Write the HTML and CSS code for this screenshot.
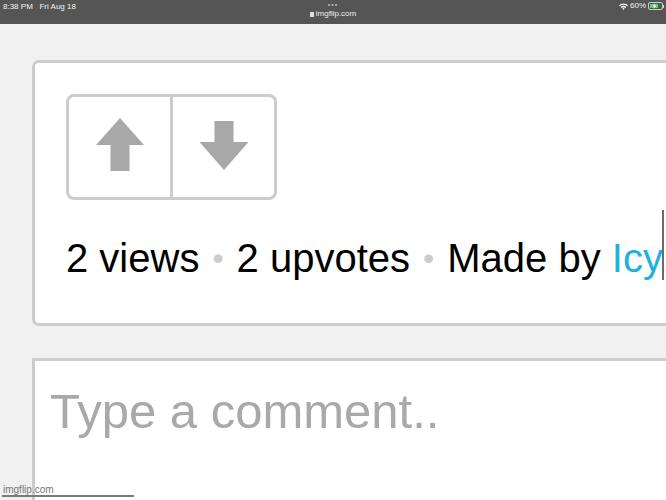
FILE: index.html
```html
<!DOCTYPE html>
<html>
<head>
<meta charset="utf-8">
<link rel="stylesheet" href="styles.css">
</head>
<body>
<div class="statusbar">
  <div class="sb-left">8:38 PM&nbsp;&nbsp;&nbsp;Fri Aug 18</div>
  <div class="sb-center">
    <div class="dots">•••</div>
    <div class="url"><span class="lock"></span>imgflip.com</div>
  </div>
  <div class="sb-right">
    <svg class="wifi" width="9" height="7" viewBox="0 0 9 7"><path d="M0 2.3A6.5 6.5 0 0 1 9 2.3L8 3.3A5 5 0 0 0 1 3.3Z M1.7 4A4 4 0 0 1 7.3 4L6.3 5A2.6 2.6 0 0 0 2.7 5Z M3.4 5.7A1.5 1.5 0 0 1 5.6 5.7L4.5 6.9Z" fill="#fff"/></svg>
    <span class="pct">60%</span>
    <span class="battery"><span class="bfill"><svg width="6" height="7" viewBox="0 0 6 7"><path d="M3.5 0L0.8 4H2.8L2.3 7L5.2 3H3.2Z" fill="#fff"/></svg></span></span><span class="bcap"></span>
  </div>
</div>
<div class="page">
  <div class="card info">
    <div class="votes">
      <div class="vote">
        <svg width="50" height="54" viewBox="0 0 50 54"><path d="M25 0L49 27H34.5V53H15.5V27H1Z" fill="#a8a8a8"/></svg>
      </div>
      <div class="vote down">
        <svg width="50" height="50" viewBox="0 0 50 50"><path d="M15.5 0H34.5V21H49.5L25 49L0.5 21H15.5Z" fill="#a8a8a8"/></svg>
      </div>
    </div>
    <div class="stats">2 views<span class="dot">•</span>2 upvotes<span class="dot">•</span>Made by <a class="author">Icy</a></div>
    <div class="caret"></div>
  </div>
  <div class="card comment">
    <div class="placeholder">Type a comment..</div>
  </div>
</div>
<div class="watermark">imgflip.com</div>
</body>
</html>
```

FILE: styles.css
```css
html, body {
  margin: 0;
  padding: 0;
}
body {
  width: 666px;
  height: 500px;
  overflow: hidden;
  background: #f0f0f0;
  font-family: "Liberation Sans", Arial, sans-serif;
  position: relative;
}
.statusbar {
  height: 24px;
  background: #555555;
  color: #f2f2f2;
  font-size: 8px;
  display: flex;
  justify-content: space-between;
  position: relative;
}
.sb-left {
  padding: 2px 0 0 3px;
  line-height: 10px;
}
.sb-center {
  position: absolute;
  left: 0;
  right: 0;
  top: 0;
  text-align: center;
}
.dots {
  font-size: 7px;
  line-height: 8px;
  letter-spacing: 1px;
  color: #bbb;
  margin-top: 1px;
}
.url {
  line-height: 10px;
  font-size: 8px;
  color: #eee;
}
.lock {
  display: inline-block;
  width: 4px;
  height: 5px;
  background: #ddd;
  margin-right: 2px;
  vertical-align: -1px;
}
.sb-right {
  display: flex;
  align-items: center;
  height: 12px;
  padding-right: 2px;
  gap: 2px;
}
.pct {
  font-size: 8px;
  line-height: 10px;
}
.battery {
  width: 15px;
  height: 8px;
  border: 1px solid #ccc;
  border-radius: 2px;
  box-sizing: border-box;
  padding: 1px;
  display: flex;
}
.bfill {
  width: 8px;
  background: #4cd964;
  display: flex;
  align-items: center;
  justify-content: center;
}
.bfill svg {
  width: 5px;
  height: 6px;
}
.bcap {
  width: 1px;
  height: 3px;
  background: #ccc;
  margin-left: -2px;
}
.page {
  padding-left: 32px;
}
.card {
  background: #fff;
  border: 3px solid #cccccc;
  width: 700px;
  box-sizing: border-box;
}
.info {
  margin-top: 36px;
  height: 266px;
  border-radius: 7px;
  padding: 31px 0 0 31px;
  position: relative;
}
.votes {
  display: flex;
  width: 211px;
  height: 106px;
  box-sizing: border-box;
  border: 3px solid #cccccc;
  border-radius: 8px;
}
.vote {
  flex: 1;
  display: flex;
  align-items: center;
  justify-content: center;
  padding-bottom: 4px;
}
.vote.down {
  border-left: 3px solid #cccccc;
  padding-bottom: 2px;
}
.stats {
  margin-top: 36px;
  font-size: 40px;
  line-height: 45px;
  color: #000;
  white-space: nowrap;
}
.dot {
  color: #cccccc;
  font-size: 32px;
  vertical-align: 3px;
  margin: 0 13px;
}
.author {
  color: #1cb2e0;
}
.caret {
  position: absolute;
  left: 627px;
  top: 147px;
  width: 2px;
  height: 70px;
  background: #6a6a6a;
}
.comment {
  margin-top: 32px;
  height: 200px;
  padding: 22px 0 0 15px;
}
.placeholder {
  font-size: 49px;
  line-height: 56px;
  color: #a9a9a9;
}
.watermark {
  position: absolute;
  left: 2px;
  bottom: 3px;
  width: 131px;
  font-size: 10px;
  line-height: 10px;
  color: #777;
  border-bottom: 2px solid #7a7a7a;
  padding-left: 1px;
}
```
